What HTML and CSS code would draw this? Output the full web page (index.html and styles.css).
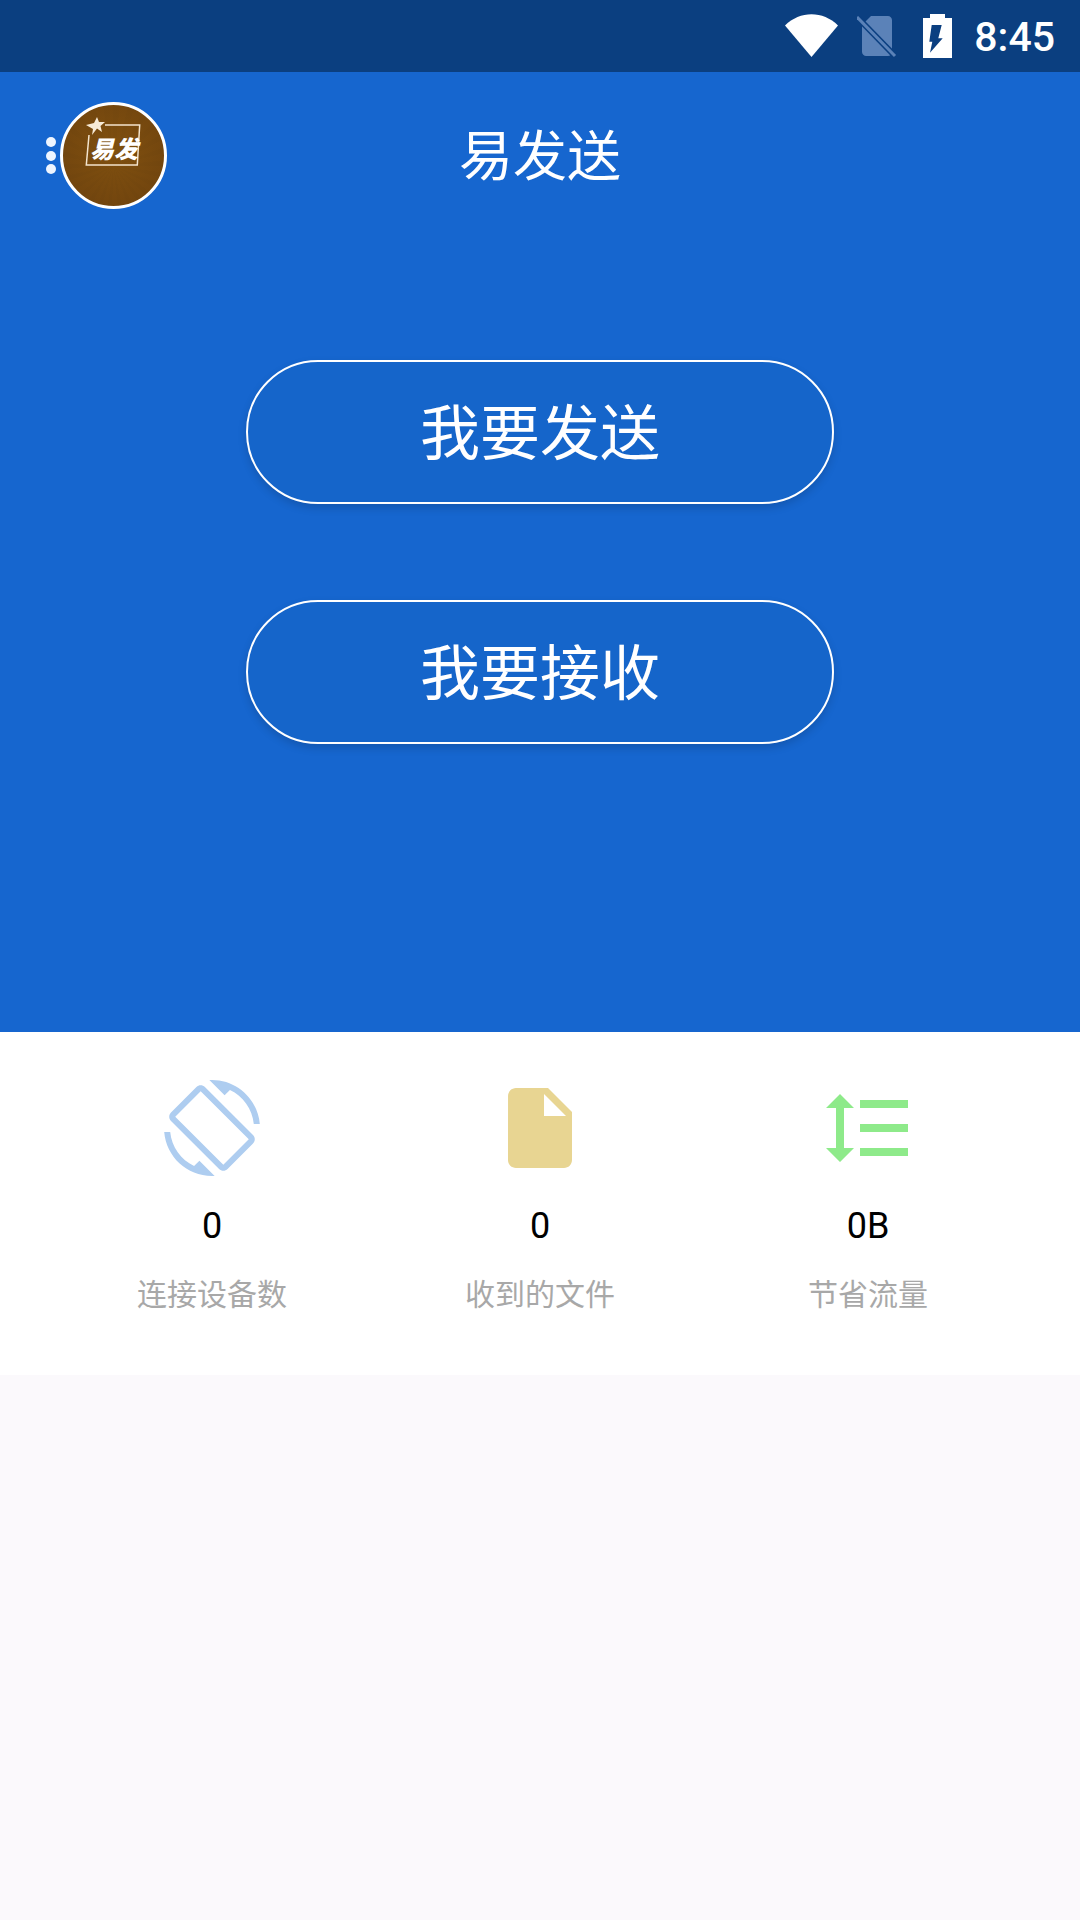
FILE: index.html
```html
<!DOCTYPE html>
<html lang="zh-CN">
<head>
  <meta charset="UTF-8" />
  <meta name="viewport" content="width=device-width, initial-scale=1.0"/>
  <title>易发送</title>
  <link rel="stylesheet" href="styles.css">
</head>
<body>
  <!-- Status bar -->
  <div class="status-bar">
    <svg class="wifi" width="53" height="43" viewBox="0 0 53 43">
      <path d="M26.5 43L0 11.5C15-3.5 38-3.5 53 11.5z" fill="#fff"/>
    </svg>
    <svg class="sim" width="40" height="42" viewBox="0 0 40 42">
      <path d="M14 0h17c2 0 4 2 4 4v32c0 2-2 4-4 4H9c-2 0-4-2-4-4V9z" fill="#5b82b8"/>
      <path d="M1 2l37 38" stroke="#0b3f80" stroke-width="6"/>
      <path d="M0 1l38 39" stroke="#5b82b8" stroke-width="3"/>
    </svg>
    <svg class="battery" width="29" height="44" viewBox="0 0 29 44">
      <path d="M7 0h15v4h7v40H0V4h7z" fill="#fff"/>
      <path d="M8.7 11H18.7L15.3 24.3H19.7L7 38.7L9.3 27.7H6.3z" fill="#0b3f80"/>
    </svg>
    <span class="clock">8:45</span>
  </div>

  <!-- Blue area -->
  <div class="main-panel">
    <div class="app-header">
      <div class="header-left">
        <div class="dots"><span></span><span></span><span></span></div>
        <div class="logo">
          <svg width="101" height="101" viewBox="0 0 101 101">
            <path d="M42 20H76.7L74.3 60H23.3L26 30" fill="none" stroke="#f3e4cd" stroke-width="1.5"/>
            <polygon points="34,12 36,17 42,17 37.5,21 39,27 34,23.5 29,30 30,24 23,20 31,18" fill="#f7ead6"/>
            <text class="logo-text" x="27" y="53">易发</text>
          </svg>
        </div>
      </div>
      <h1>易发送</h1>
    </div>

    <div class="actions">
      <button class="action-btn">我要发送</button>
      <button class="action-btn">我要接收</button>
    </div>
  </div>

  <!-- Stats -->
  <div class="stats">
    <div class="stat">
      <svg width="96" height="96" viewBox="0 0 24 24" fill="#aecdf0">
        <path d="M16.48 2.52c3.27 1.55 5.61 4.72 5.97 8.48h1.5C23.44 4.84 18.29 0 12 0l-.66.03 3.81 3.81 1.33-1.32zm-6.25-.77c-.59-.59-1.54-.59-2.12 0L1.75 8.11c-.59.59-.59 1.54 0 2.12l12.02 12.02c.59.59 1.54.59 2.12 0l6.36-6.36c.59-.59.59-1.54 0-2.12L10.23 1.75zm4.6 19.44L2.81 9.17l6.36-6.36 12.02 12.02-6.36 6.36zm-7.31.29C4.25 19.94 1.91 16.76 1.55 13H.05C.56 19.16 5.71 24 12 24l.66-.03-3.81-3.81-1.33 1.32z"/>
      </svg>
      <div class="stat-value">0</div>
      <div class="stat-label">连接设备数</div>
    </div>
    <div class="stat">
      <svg width="96" height="96" viewBox="0 0 24 24" fill="#e8d592">
        <path d="M6 2c-1.1 0-1.99.9-1.99 2L4 20c0 1.1.89 2 1.99 2H18c1.1 0 2-.9 2-2V8l-6-6H6zm7 7V3.5L18.5 9H13z"/>
      </svg>
      <div class="stat-value">0</div>
      <div class="stat-label">收到的文件</div>
    </div>
    <div class="stat">
      <svg width="96" height="96" viewBox="0 0 24 24" fill="#8eea8a">
        <path d="M6 7h2.5L5 3.5 1.5 7H4v10H1.5L5 20.5 8.5 17H6V7zm4-2v2h12V5H10zm0 14h12v-2H10v2zm0-6h12v-2H10v2z"/>
      </svg>
      <div class="stat-value">0B</div>
      <div class="stat-label">节省流量</div>
    </div>
  </div>
</body>
</html>
```

FILE: styles.css
```css
html, body {
  margin: 0;
  padding: 0;
}

body {
  width: 1080px;
  height: 1920px;
  overflow: hidden;
  background: #fbf9fc;
  font-family: Roboto, "Noto Sans CJK SC", sans-serif;
}

/* Status bar */
.status-bar {
  height: 72px;
  box-sizing: border-box;
  padding-right: 25px;
  background: #0b3f80;
  display: flex;
  align-items: flex-start;
  justify-content: flex-end;
}

.wifi { margin-top: 14px; margin-right: 19px; }
.sim { margin-top: 16px; margin-right: 26px; }
.battery { margin-top: 14px; margin-right: 22px; }

.clock {
  color: #fff;
  font-size: 41px;
  font-weight: 500;
  line-height: 74px;
  height: 72px;
}

/* Blue area */
.main-panel {
  height: 960px;
  background: #1666cf;
  box-sizing: border-box;
  padding-top: 30px;
}

.app-header {
  display: grid;
  grid-template-columns: 1fr auto 1fr;
  align-items: center;
  height: 107px;
}

.header-left {
  display: flex;
  align-items: center;
  padding-left: 46px;
  gap: 4px;
}

.dots {
  display: flex;
  flex-direction: column;
  gap: 3.5px;
}

.dots span {
  width: 10px;
  height: 10px;
  border-radius: 50%;
  background: #eef5ff;
}

.logo {
  width: 107px;
  height: 107px;
  box-sizing: border-box;
  border: 3px solid #fff;
  border-radius: 50%;
  overflow: hidden;
  background:
    repeating-conic-gradient(from 0deg at 50% 60%, rgba(0, 0, 0, 0.02) 0deg 6deg, transparent 6deg 14deg),
    radial-gradient(circle at 50% 45%, #80500f, #6e420e);
}

.logo svg { display: block; }

.logo-text {
  fill: #fff;
  font-family: "Noto Sans CJK SC", sans-serif;
  font-size: 24px;
  font-weight: 900;
  font-style: italic;
}

h1 {
  grid-column: 2;
  margin: 0 0 5px;
  color: #fff;
  font-size: 54px;
  font-weight: 400;
  font-family: "Noto Sans CJK SC", sans-serif;
  line-height: 102px;
}

.actions {
  display: flex;
  flex-direction: column;
  align-items: center;
  gap: 96px;
  margin-top: 151px;
}

.action-btn {
  width: 588px;
  height: 144px;
  border: 2px solid #fff;
  border-radius: 72px;
  background: #1565ca;
  box-shadow: 0 4px 8px rgba(0, 0, 0, 0.15);
  color: #fff;
  font-family: "Noto Sans CJK SC", sans-serif;
  font-size: 60px;
  padding: 0 0 8px;
}

/* Stats */
.stats {
  height: 343px;
  box-sizing: border-box;
  padding: 48px 48px 0;
  background: #fff;
  display: grid;
  grid-template-columns: repeat(3, 1fr);
}

.stat {
  display: flex;
  flex-direction: column;
  align-items: center;
}

.stat-value {
  margin-top: 26px;
  font-size: 36px;
  line-height: 48px;
  color: #000;
}

.stat-label {
  margin-top: 20px;
  font-family: "Noto Sans CJK SC", sans-serif;
  font-size: 30px;
  line-height: 44px;
  color: #a8a8a8;
}
```
